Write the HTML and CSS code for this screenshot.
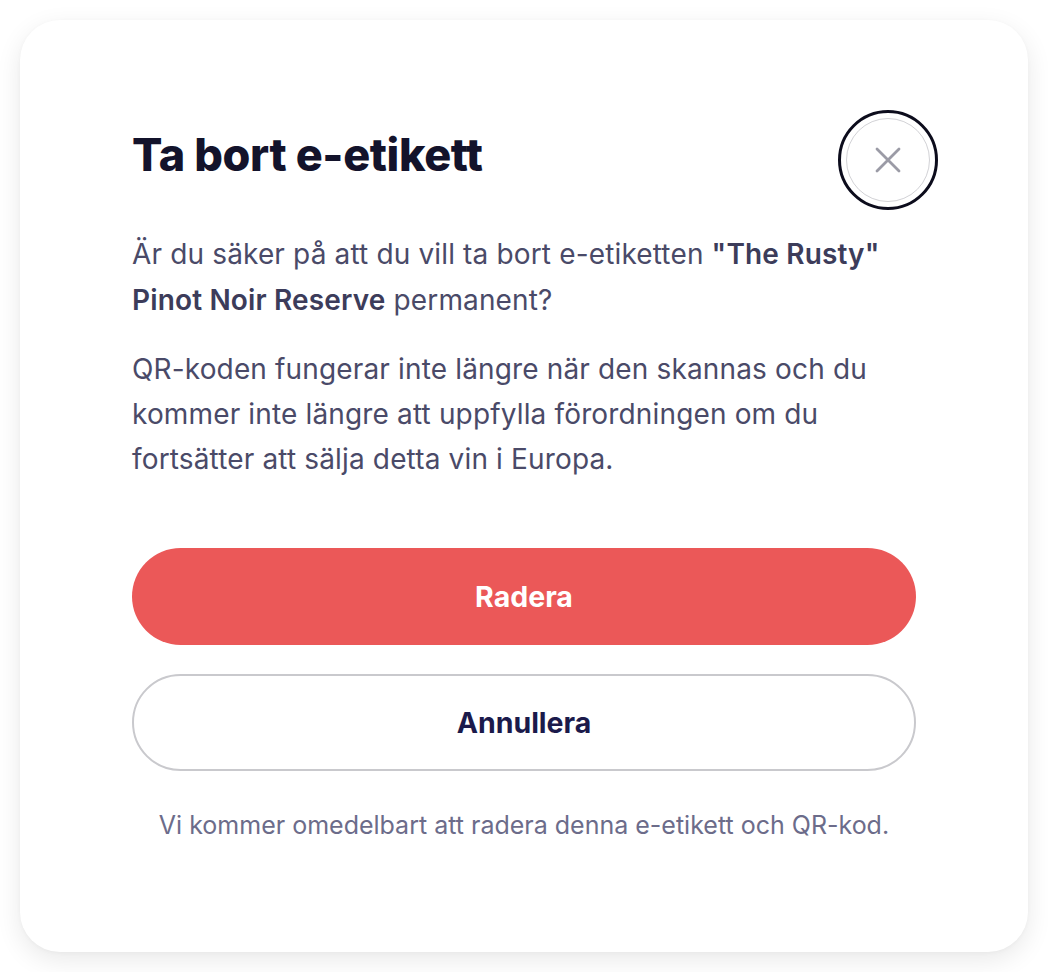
FILE: index.html
```html
<!DOCTYPE html>
<html lang="sv">
<head>
<meta charset="utf-8">
<title>Ta bort e-etikett</title>
<link rel="stylesheet" href="styles.css">
</head>
<body>
<div class="card" role="dialog" aria-labelledby="dlg-title">
  <div class="header">
    <h1 id="dlg-title" class="title">Ta bort e-etikett</h1>
    <button class="close" aria-label="Stäng">
      <svg width="28" height="28" viewBox="0 0 28 28" aria-hidden="true">
        <path d="M3 3 L25 25 M25 3 L3 25" stroke="#9b9ba6" stroke-width="2.8" stroke-linecap="round" fill="none"/>
      </svg>
    </button>
  </div>
  <p class="text text-first">Är du säker på att du vill ta bort e-etiketten <strong>"The Rusty"</strong> <strong>Pinot Noir Reserve</strong> permanent?</p>
  <p class="text text-second">QR-koden fungerar inte längre när den skannas och du kommer inte längre att uppfylla förordningen om du fortsätter att sälja detta vin i Europa.</p>
  <div class="actions">
    <button class="btn btn-danger">Radera</button>
    <button class="btn btn-outline">Annullera</button>
  </div>
  <p class="note">Vi kommer omedelbart att radera denna e-etikett och QR-kod.</p>
</div>
</body>
</html>
```
FILE: styles.css
```css
* { box-sizing: border-box; }
html, body {
  margin: 0;
  padding: 0;
  background: #ffffff;
}
body {
  font-family: "Inter", "Noto Sans", sans-serif;
  padding: 20px;
}
.card {
  width: 1008px;
  height: 932px;
  background: #ffffff;
  border-radius: 40px;
  box-shadow: 0 8px 26px rgba(0, 0, 0, 0.09), 0 1px 4px rgba(0, 0, 0, 0.03);
  padding: 98px 112px 0 112px;
}
.header {
  display: flex;
  align-items: center;
  justify-content: space-between;
}
.title {
  margin: 0 0 10px 0;
  font-size: 45px;
  line-height: 54px;
  font-weight: 800;
  color: #13132b;
  letter-spacing: -0.4px;
}
.close {
  width: 84px;
  height: 84px;
  margin-right: -14px;
  border-radius: 50%;
  border: 1px solid #d2d2d6;
  background: #ffffff;
  outline: 3px solid #0c0c1c;
  outline-offset: 5px;
  display: flex;
  align-items: center;
  justify-content: center;
  padding: 0;
}
.text {
  margin: 0;
  font-size: 28px;
  line-height: 46px;
  letter-spacing: 0.15px;
  color: #4a4a68;
}
.text strong {
  font-weight: 600;
  color: #3c3c5a;
}
.text-first { margin-top: 29px; }
.text-second { margin-top: 24px; line-height: 45px; }
.actions {
  margin-top: 66px;
  display: flex;
  flex-direction: column;
  gap: 29px;
}
.btn {
  height: 97px;
  border-radius: 49px;
  font-family: inherit;
  font-size: 28.5px;
  font-weight: 700;
  cursor: pointer;
  padding: 0;
}
.btn-danger {
  background: #eb5858;
  color: #ffffff;
  border: none;
}
.btn-outline {
  background: #ffffff;
  color: #1b1a4b;
  border: 2px solid #c9c9cd;
}
.note {
  margin: 39px 0 0 0;
  text-align: center;
  font-size: 25px;
  line-height: 30px;
  color: #6c6c8a;
}
```
